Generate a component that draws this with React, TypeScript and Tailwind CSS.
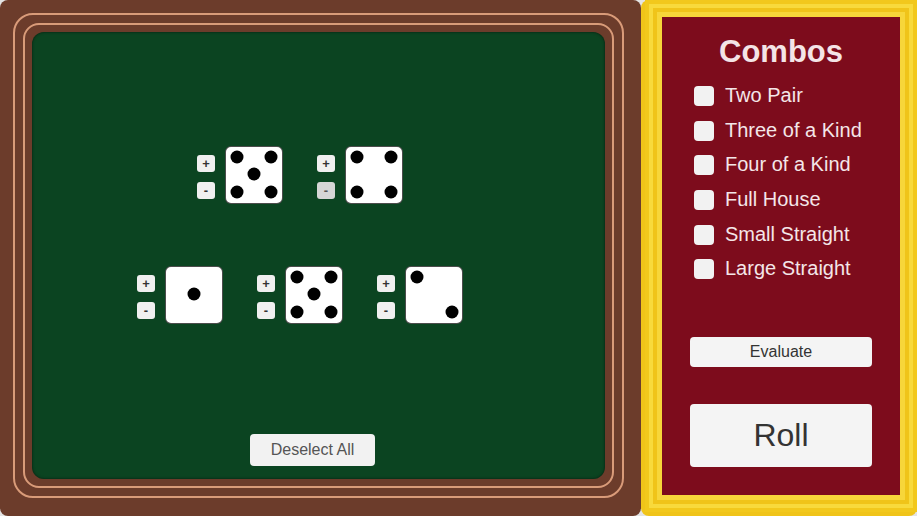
import React from "react";

type Pip = [number, number];

const FACES: Record<number, Pip[]> = {
  1: [[29, 28]],
  2: [[12, 11], [47, 46]],
  4: [[12, 11], [46, 11], [12, 46], [46, 46]],
  5: [[12, 11], [46, 11], [29, 28], [12, 46], [46, 46]],
};

function Die({ value }: { value: number }) {
  return (
    <div className="w-[58px] h-[58px] bg-white rounded-[6px] border border-black/70 overflow-hidden">
      <svg width="58" height="58" viewBox="0 0 58 58" className="-m-px">
        {FACES[value].map(([cx, cy], i) => (
          <circle key={i} cx={cx} cy={cy} r="6.5" fill="#000" />
        ))}
      </svg>
    </div>
  );
}

function DieUnit({ value, pressed = false }: { value: number; pressed?: boolean }) {
  return (
    <div className="flex items-start gap-[10px]">
      {/* +/- controls */}
      <div className="flex flex-col gap-[10px] pt-[9px]">
        <button className="w-[18px] h-[17px] rounded-[3px] bg-[#f0f0f0] text-[#333] text-[13px] font-bold leading-none flex items-center justify-center">
          +
        </button>
        <button
          className={
            pressed
              ? "w-[18px] h-[17px] rounded-[3px] bg-[#d6d6d6] text-[#555] text-[13px] font-bold leading-none flex items-center justify-center"
              : "w-[18px] h-[17px] rounded-[3px] bg-[#f0f0f0] text-[#333] text-[13px] font-bold leading-none flex items-center justify-center"
          }
        >
          -
        </button>
      </div>
      <Die value={value} />
    </div>
  );
}

const COMBOS = [
  "Two Pair",
  "Three of a Kind",
  "Four of a Kind",
  "Full House",
  "Small Straight",
  "Large Straight",
];

export default function App() {
  return (
    <div className="w-[917px] h-[516px] flex bg-[#e4e4e4] font-['Liberation_Sans',Arial,sans-serif]">
      {/* Table */}
      <div className="w-[641px] h-full bg-[#6c3c2b] rounded-[8px] pl-[13px] pt-[13px] pr-[17px] pb-[18px] flex">
        <div className="flex-1 flex rounded-[20px] border-2 border-[#d99b79] p-[8px]">
          <div className="flex-1 flex rounded-[16px] border-2 border-[#d99b79] p-[7px]">
            <div className="flex-1 flex flex-col bg-[#0b4421] rounded-[12px] shadow-[inset_0_0_3px_rgba(0,0,0,0.6)] pt-[114px]">
              <div className="flex gap-[34px] pl-[165px]">
                <DieUnit value={5} />
                <DieUnit value={4} pressed />
              </div>
              <div className="flex gap-[34px] pl-[105px] mt-[62px]">
                <DieUnit value={1} />
                <DieUnit value={5} />
                <DieUnit value={2} />
              </div>
              <div className="mt-auto pb-[13px] pl-[218px]">
                <button className="w-[125px] h-[32px] rounded-[4px] bg-[#f2f2f2] text-[#555] text-[16px]">
                  Deselect All
                </button>
              </div>
            </div>
          </div>
        </div>
      </div>

      {/* Combos panel */}
      <div className="flex-1 flex bg-[#f0c419] rounded-[8px] pl-[4px] pb-[4px]">
        <div className="flex-1 flex border-[4px] border-[#f2c81c]">
          <div className="flex-1 flex border-[4px] border-[#f8da3c]">
            <div className="flex-1 flex border-[4px] border-[#f0c419]">
              <div className="flex-1 flex border-[5px] border-[#f7d63a]">
                <div className="flex-1 flex flex-col bg-[#7d0c1c] pt-[17px]">
                  <h2 className="text-center text-[31px] leading-[36px] font-bold text-[#f4e4e6]">
                    Combos
                  </h2>
                  <ul className="mt-[9px] pl-[32px]">
                    {COMBOS.map((c) => (
                      <li key={c} className="h-[34.6px] flex items-center gap-[11px]">
                        <span className="w-[20px] h-[20px] rounded-[4px] bg-[#f2f2f2]" />
                        <span className="text-[20px] leading-[24px] text-[#f4e6e8] -mt-[2px]">
                          {c}
                        </span>
                      </li>
                    ))}
                  </ul>
                  <div className="pl-[28px] mt-[50px] flex flex-col gap-[37px]">
                    <button className="w-[182px] h-[30px] rounded-[4px] bg-[#f4f4f4] text-[#333] text-[16px]">
                      Evaluate
                    </button>
                    <button className="w-[182px] h-[63px] rounded-[4px] bg-[#f4f4f4] text-[#333] text-[32px]">
                      Roll
                    </button>
                  </div>
                </div>
              </div>
            </div>
          </div>
        </div>
      </div>
    </div>
  );
}
